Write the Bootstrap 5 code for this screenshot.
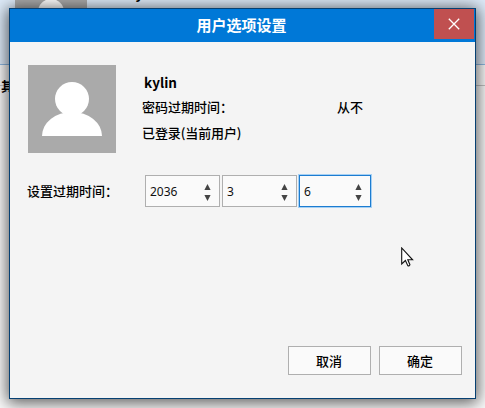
<!DOCTYPE html>
<html lang="zh-CN">
<head>
<meta charset="utf-8">
<title>用户选项设置</title>
<link href="https://cdn.jsdelivr.net/npm/bootstrap@5.3.0/dist/css/bootstrap.min.css" rel="stylesheet">
<style>
body{width:485px;height:408px;background:#fbfbfb;color:#000;font:500 13px/20px "Noto Sans CJK SC",sans-serif}
.backdrop-head{height:65px;background:#deebf9;border-bottom:1px solid #8fb9e3;padding-left:15px}
.backdrop-avatar{width:72px;height:30px;background:#aaa}
.backdrop-name{margin:-17px 0 0 40px;font-size:14px;font-weight:700}
.backdrop-rule{height:21px;border-bottom:1px solid #c4c4c4}
.backdrop-label{margin:-10px 0 0 1px;font-weight:700}
.dialog-window{left:9px;top:8px;width:467px;height:391px;background:#f4f4f4;border:1px solid #064072;box-shadow:0 2px 15px 2px rgba(0,0,0,.64)}
.title-strip{height:33px;background:#0078d7;color:#fff;padding-right:1px}
.title-strip h1{font-size:15px;font-weight:700;line-height:32px;padding-left:39px}
.close-button{width:40px;height:30px;background:#c05050}
.profile{padding:23px 18px 0;height:133px}
.details{padding:7px 0 0 26px}
.user-name{font-size:13.5px;font-weight:700;padding-left:2px}
.expiry-line{margin-top:5px}
.expiry-line span:first-child{width:195px}
.status-line{margin-top:6px;letter-spacing:-.1px}
.date-label{width:116px}
.date-row{padding-left:17px;gap:2px}
.spin-box{width:75px;height:32px;border:1px solid #afafaf;background:#fafafa;padding:2px 8px 0 4px;font:400 12px/20px "Noto Sans",sans-serif;color:#111}
.spin-box.active{width:72px;border-color:#1c7cd0;box-shadow:0 0 0 1px #a5d0f4}
.actions{padding-right:13px;padding-bottom:23px;gap:8px}
.action-button{width:83px;height:29px;border:1px solid #afafaf;border-radius:0;background:#fafafa;color:#000;font-size:13px;font-weight:500;line-height:20px;padding:3px 1px 3px 0}
.pointer{left:401px;top:247px}
</style>
<script src="https://cdn.jsdelivr.net/npm/bootstrap@5.3.0/dist/js/bootstrap.bundle.min.js"></script>
</head>
<body class="position-relative overflow-hidden m-0">
<div class="backdrop-head d-flex overflow-hidden">
  <div class="backdrop-avatar"><svg class="d-block" width="72" height="30"><circle cx="36" cy="12" r="13" fill="#fff"/></svg></div>
  <div class="backdrop-name">kylin</div>
</div>
<div class="backdrop-rule"></div>
<div class="backdrop-label">其他用户</div>

<main class="dialog-window position-absolute d-flex flex-column">
  <header class="title-strip d-flex">
    <h1 class="flex-grow-1 text-center m-0">用户选项设置</h1>
    <button class="close-button btn border-0 rounded-0 p-0 d-flex align-items-center justify-content-center" aria-label="关闭">
      <svg width="12" height="12" viewBox="0 0 12 12" stroke="#fff" stroke-width="1.3"><path d="M.8.8 11.2 11.2M11.2.8.8 11.2"/></svg>
    </button>
  </header>
  <section class="profile d-flex align-items-start">
    <svg class="flex-shrink-0" width="88" height="88" viewBox="0 0 88 88"><path fill="#aaa" d="M0 0h88v88H0z"/><circle cx="44" cy="34" r="17" fill="#fff"/><path fill="#fff" d="M14 71A30 24 0 0 1 74 71z"/></svg>
    <div class="details">
      <div class="user-name">kylin</div>
      <div class="expiry-line d-flex"><span>密码过期时间：</span><span>从不</span></div>
      <div class="status-line">已登录(当前用户)</div>
    </div>
  </section>
  <section class="date-row d-flex align-items-center">
    <div class="date-label text-nowrap">设置过期时间：</div>
    <div class="spin-box d-flex align-items-center justify-content-between"><span>2036</span><svg width="7" height="18"><path fill="#444" d="M.4 7 3.5 1l3.1 6zM.4 12h6.2L3.5 18z"/></svg></div>
    <div class="spin-box d-flex align-items-center justify-content-between"><span>3</span><svg width="7" height="18"><path fill="#444" d="M.4 7 3.5 1l3.1 6zM.4 12h6.2L3.5 18z"/></svg></div>
    <div class="spin-box active d-flex align-items-center justify-content-between"><span>6</span><svg width="7" height="18"><path fill="#444" d="M.4 7 3.5 1l3.1 6zM.4 12h6.2L3.5 18z"/></svg></div>
  </section>
  <footer class="actions d-flex justify-content-end mt-auto">
    <button class="btn action-button">取消</button>
    <button class="btn action-button">确定</button>
  </footer>
</main>
<svg class="pointer position-absolute" width="14" height="22" viewBox="0 0 14 22"><path fill="#fff" stroke="#111" stroke-width="1.1" d="M.7 1v16l3.7-3.5 2.4 5.2c1 .5 2-.1 2.1-1l-2.1-4.9h4.8z"/></svg>
</body>
</html>
